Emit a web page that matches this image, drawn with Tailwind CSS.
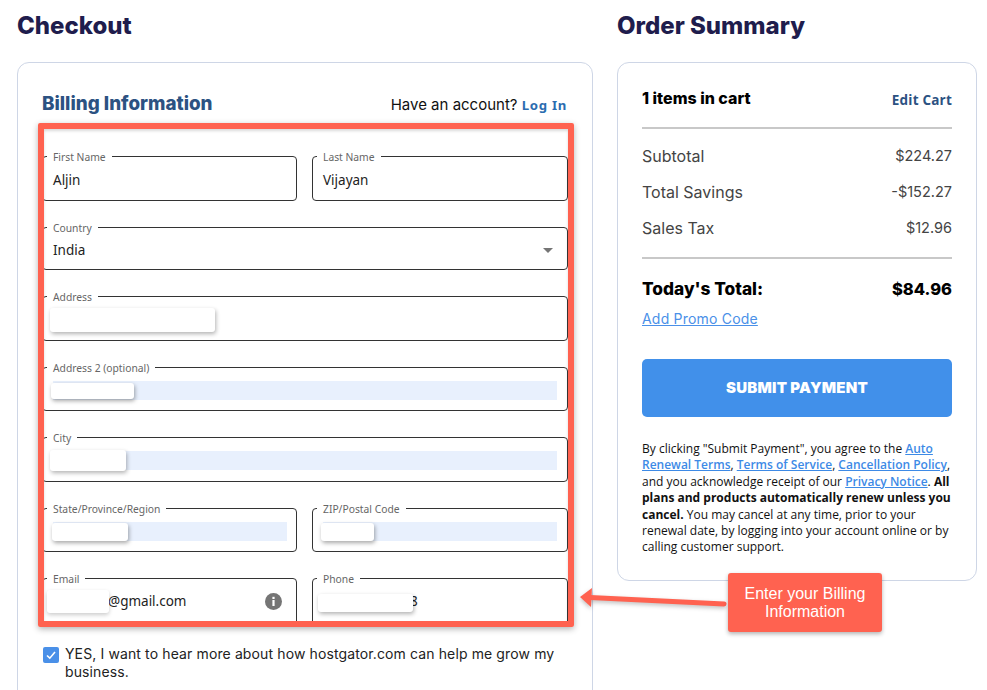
<!DOCTYPE html>
<html>
<head>
<meta charset="utf-8">
<script src="https://cdn.jsdelivr.net/npm/@tailwindcss/browser@4"></script>
</head>
<body class="bg-white">
<div class="relative w-[987px] h-[690px] overflow-hidden flex items-start gap-x-[24px] pl-[17px] font-['Noto_Sans',sans-serif]">
  <!-- left -->
  <div class="w-[576px] shrink-0">
    <h1 class="h-[62px] pb-[10px] flex items-center text-[24px] font-extrabold text-[#1f1d4d] font-['Inter',sans-serif]">Checkout</h1>
    <div class="h-[700px] border border-[#ced6e6] rounded-[12px] pt-[28px] pl-[20px]">
      <div class="flex items-center justify-between w-[536px] h-[32px] pb-[6px] pl-[4px] pr-[7px]">
        <h2 class="text-[18.8px] font-extrabold text-[#2c5282] font-['Inter',sans-serif]">Billing Information</h2>
        <p class="text-[15px] text-[#111] font-['Inter',sans-serif] pt-[2px]">Have an account? <a class="font-['Noto_Sans',sans-serif] text-[13.2px] font-bold text-[#2b6cb0] tracking-[0.7px]">Log In</a></p>
      </div>
      <div class="w-[536px] h-[504px] border-[6px] border-[#ff6250] rounded-[2px] overflow-hidden shadow-[0_2px_6px_rgba(0,0,0,0.3),inset_0_2px_3px_rgba(0,0,0,0.15)]">
        <div class="-ml-[2px] w-[526px] pt-[21px] flex flex-col gap-y-[20px] text-[13.5px] text-[#222]">
          <div class="grid grid-cols-[255px_256px] gap-x-[15px]">
            <fieldset class="h-[51px] border border-[#333] rounded-[4px]">
              <legend class="ml-[4px] px-[6px] h-[12px] text-[10.3px] leading-[14px] text-[#666]">First Name</legend>
              <div class="h-[36px] flex items-center px-[10px]">Aljin</div>
            </fieldset>
            <fieldset class="h-[51px] border border-[#333] rounded-[4px]">
              <legend class="ml-[4px] px-[6px] h-[12px] text-[10.3px] leading-[14px] text-[#666]">Last Name</legend>
              <div class="h-[36px] flex items-center px-[10px]">Vijayan</div>
            </fieldset>
          </div>
          <fieldset class="h-[49px] border border-[#333] rounded-[4px]">
            <legend class="ml-[4px] px-[6px] h-[12px] text-[10.3px] leading-[14px] text-[#666]">Country</legend>
            <div class="h-[34px] flex items-center justify-between pl-[10px] pr-[14px]">
              <span>India</span>
              <span class="w-0 h-0 border-x-[5px] border-x-transparent border-t-[5px] border-t-[#757575]"></span>
            </div>
          </fieldset>
          <fieldset class="h-[51px] border border-[#333] rounded-[4px]">
            <legend class="ml-[4px] px-[6px] h-[12px] text-[10.3px] leading-[14px] text-[#666]">Address</legend>
            <div class="h-[36px] flex items-center px-[10px]">
              <div class="-ml-[3px] w-[165px] h-[24px] bg-white rounded-[3px] shadow-[1px_2px_4px_rgba(0,0,0,0.3)]"></div>
            </div>
          </fieldset>
          <fieldset class="h-[50px] border border-[#333] rounded-[4px]">
            <legend class="ml-[4px] px-[6px] h-[12px] text-[10.3px] leading-[14px] text-[#666]">Address 2 (optional)</legend>
            <div class="h-[35px] flex items-center pl-[10px] pr-[10px]">
              <div class="w-full h-[19px] bg-[#e8f0fd] flex items-center">
                <div class="-ml-[2px] w-[83px] h-[16px] bg-white rounded-[3px] shadow-[1px_2px_4px_rgba(0,0,0,0.35)]"></div>
              </div>
            </div>
          </fieldset>
          <fieldset class="h-[51px] border border-[#333] rounded-[4px]">
            <legend class="ml-[4px] px-[6px] h-[12px] text-[10.3px] leading-[14px] text-[#666]">City</legend>
            <div class="h-[35px] flex items-center pl-[10px] pr-[10px]">
              <div class="w-full h-[19px] bg-[#e8f0fd] flex items-center">
                <div class="-ml-[3px] w-[76px] h-[21px] bg-white rounded-[3px] shadow-[1px_2px_4px_rgba(0,0,0,0.3)]"></div>
              </div>
            </div>
          </fieldset>
          <div class="grid grid-cols-[255px_256px] gap-x-[15px]">
            <fieldset class="h-[50px] border border-[#333] rounded-[4px]">
              <legend class="ml-[4px] px-[6px] h-[12px] text-[10.3px] leading-[14px] text-[#666]">State/Province/Region</legend>
              <div class="h-[35px] flex items-center pl-[10px] pr-[9px]">
                <div class="w-full h-[19px] bg-[#e8f0fd] flex items-center">
                  <div class="-ml-[1px] w-[76px] h-[18px] bg-white rounded-[3px] shadow-[1px_2px_4px_rgba(0,0,0,0.35)]"></div>
                </div>
              </div>
            </fieldset>
            <fieldset class="h-[50px] border border-[#333] rounded-[4px]">
              <legend class="ml-[4px] px-[6px] h-[12px] text-[10.3px] leading-[14px] text-[#666]">ZIP/Postal Code</legend>
              <div class="h-[35px] flex items-center pl-[10px] pr-[10px]">
                <div class="w-full h-[19px] bg-[#e8f0fd] flex items-center">
                  <div class="-ml-[2px] w-[53px] h-[18px] bg-white rounded-[3px] shadow-[1px_2px_4px_rgba(0,0,0,0.35)]"></div>
                </div>
              </div>
            </fieldset>
          </div>
          <div class="grid grid-cols-[255px_256px] gap-x-[15px]">
            <fieldset class="h-[70px] border border-[#333] rounded-[4px]">
              <legend class="ml-[4px] px-[6px] h-[12px] text-[10.3px] leading-[14px] text-[#666]">Email</legend>
              <div class="h-[34px] flex items-center pl-[4px] pr-[14px]">
                <div class="relative w-[62px] h-[23px] bg-white rounded-[3px] shadow-[0_2px_4px_rgba(0,0,0,0.2)]"></div>
                <span class="-ml-[1px] flex-1">@gmail.com</span>
                <svg class="w-[17px] h-[17px]" viewBox="0 0 17 17"><circle cx="8.5" cy="8.5" r="8.5" fill="#757575"/><rect x="7.4" y="7" width="2.2" height="6" fill="#fff"/><rect x="7.4" y="3.8" width="2.2" height="2.2" fill="#fff"/></svg>
              </div>
            </fieldset>
            <fieldset class="h-[70px] border border-[#333] rounded-[4px]">
              <legend class="ml-[4px] px-[6px] h-[12px] text-[10.3px] leading-[14px] text-[#666]">Phone</legend>
              <div class="h-[34px] flex items-center pl-[5px]">
                <div class="relative z-10 mt-[4px] w-[95px] h-[18px] bg-white rounded-[3px] shadow-[1px_2px_4px_rgba(0,0,0,0.3)]"></div>
                <span class="-ml-[3px]">8</span>
              </div>
            </fieldset>
          </div>
        </div>
      </div>
      <label class="flex items-start mt-[21px] ml-[5px] w-[520px]">
        <span class="shrink-0 w-[16px] h-[16px] mt-[-1px] bg-[#4a90e8] rounded-[2px] flex items-center justify-center">
          <svg class="w-[12px] h-[12px]" viewBox="0 0 12 12" fill="none"><path d="M2 6.5 L4.8 9.2 L10 3" stroke="#fff" stroke-width="1.6"/></svg>
        </span>
        <span class="ml-[6px] text-[14px] leading-[18px] tracking-[0.12px] text-[#222] font-['Inter',sans-serif] mt-[-3px]">YES, I want to hear more about how hostgator.com can help me grow my business.</span>
      </label>
    </div>
  </div>
  <!-- right -->
  <div class="w-[360px] shrink-0">
    <h1 class="h-[62px] pb-[10px] flex items-center text-[24px] font-extrabold text-[#1f1d4d] font-['Inter',sans-serif]">Order Summary</h1>
    <div class="h-[519px] border border-[#ced6e6] rounded-[12px] px-[24px] pt-[24px]">
      <div class="flex items-center justify-between h-[24px] font-['Inter',sans-serif]">
        <span class="text-[16px] font-extrabold text-black pb-[2px]">1 items in cart</span>
        <a class="text-[13.5px] font-bold text-[#2c5282] font-['Open_Sans',sans-serif] tracking-[0.2px] pt-[3px]">Edit Cart</a>
      </div>
      <div class="mt-[16px] h-[2px] bg-[#c8c8c8]"></div>
      <div class="mt-[9px] flex flex-col text-[16px] text-[#444] font-['Inter',sans-serif]">
        <div class="h-[36px] flex items-center justify-between"><span>Subtotal</span><span class="text-[14.5px]">$224.27</span></div>
        <div class="h-[36px] flex items-center justify-between"><span>Total Savings</span><span class="text-[14.5px]">-$152.27</span></div>
        <div class="h-[36px] flex items-center justify-between"><span>Sales Tax</span><span class="text-[14.5px]">$12.96</span></div>
      </div>
      <div class="mt-[11px] h-[2px] bg-[#c8c8c8]"></div>
      <div class="mt-[18px] h-[24px] flex items-center justify-between text-[17.3px] font-extrabold text-black font-['Inter',sans-serif]"><span>Today's Total:</span><span class="text-[16.5px]">$84.96</span></div>
      <a class="block mt-[9px] text-[14px] leading-[18px] tracking-[0.2px] text-[#4a90e8] underline font-['Inter',sans-serif]">Add Promo Code</a>
      <button class="mt-[31px] w-full h-[58px] rounded-[5px] bg-[#4190ea] text-white text-[15px] font-black font-['Inter',sans-serif] tracking-[0.2px]">SUBMIT PAYMENT</button>
      <p class="mt-[24px] text-[12px] leading-[16.4px] text-[#111] font-['Open_Sans',sans-serif]">By clicking "Submit Payment", you agree to the <a class="text-[#3d8ae6] underline font-semibold">Auto Renewal Terms</a>, <a class="text-[#3d8ae6] underline font-semibold">Terms of Service</a>, <a class="text-[#3d8ae6] underline font-semibold">Cancellation Policy</a>, and you acknowledge receipt of our <a class="text-[#3d8ae6] underline font-semibold">Privacy Notice</a>. <b>All plans and products automatically renew unless you cancel.</b> You may cancel at any time, prior to your renewal date, by logging into your account online or by calling customer support.</p>
    </div>
  </div>
  <!-- annotation -->
  <svg class="absolute left-[570px] top-[580px] w-[165px] h-[35px]" viewBox="0 0 165 35" fill="none" style="filter:drop-shadow(0 2px 2px rgba(0,0,0,.25))">
    <path d="M20 17.5 L154 24" stroke="#ff6250" stroke-width="5" stroke-linecap="round"/>
    <path d="M10 17 L22 8 L21 27 Z" fill="#ff6250"/>
  </svg>
  <div class="absolute left-[728px] top-[573px] w-[154px] h-[59px] bg-[#ff6250] rounded-[3px] shadow-[0_2px_4px_rgba(0,0,0,0.3)] flex items-center justify-center text-center text-white text-[16px] leading-[18px] font-['Liberation_Sans',sans-serif]">Enter your Billing<br>Information</div>
</div>
</body>
</html>
